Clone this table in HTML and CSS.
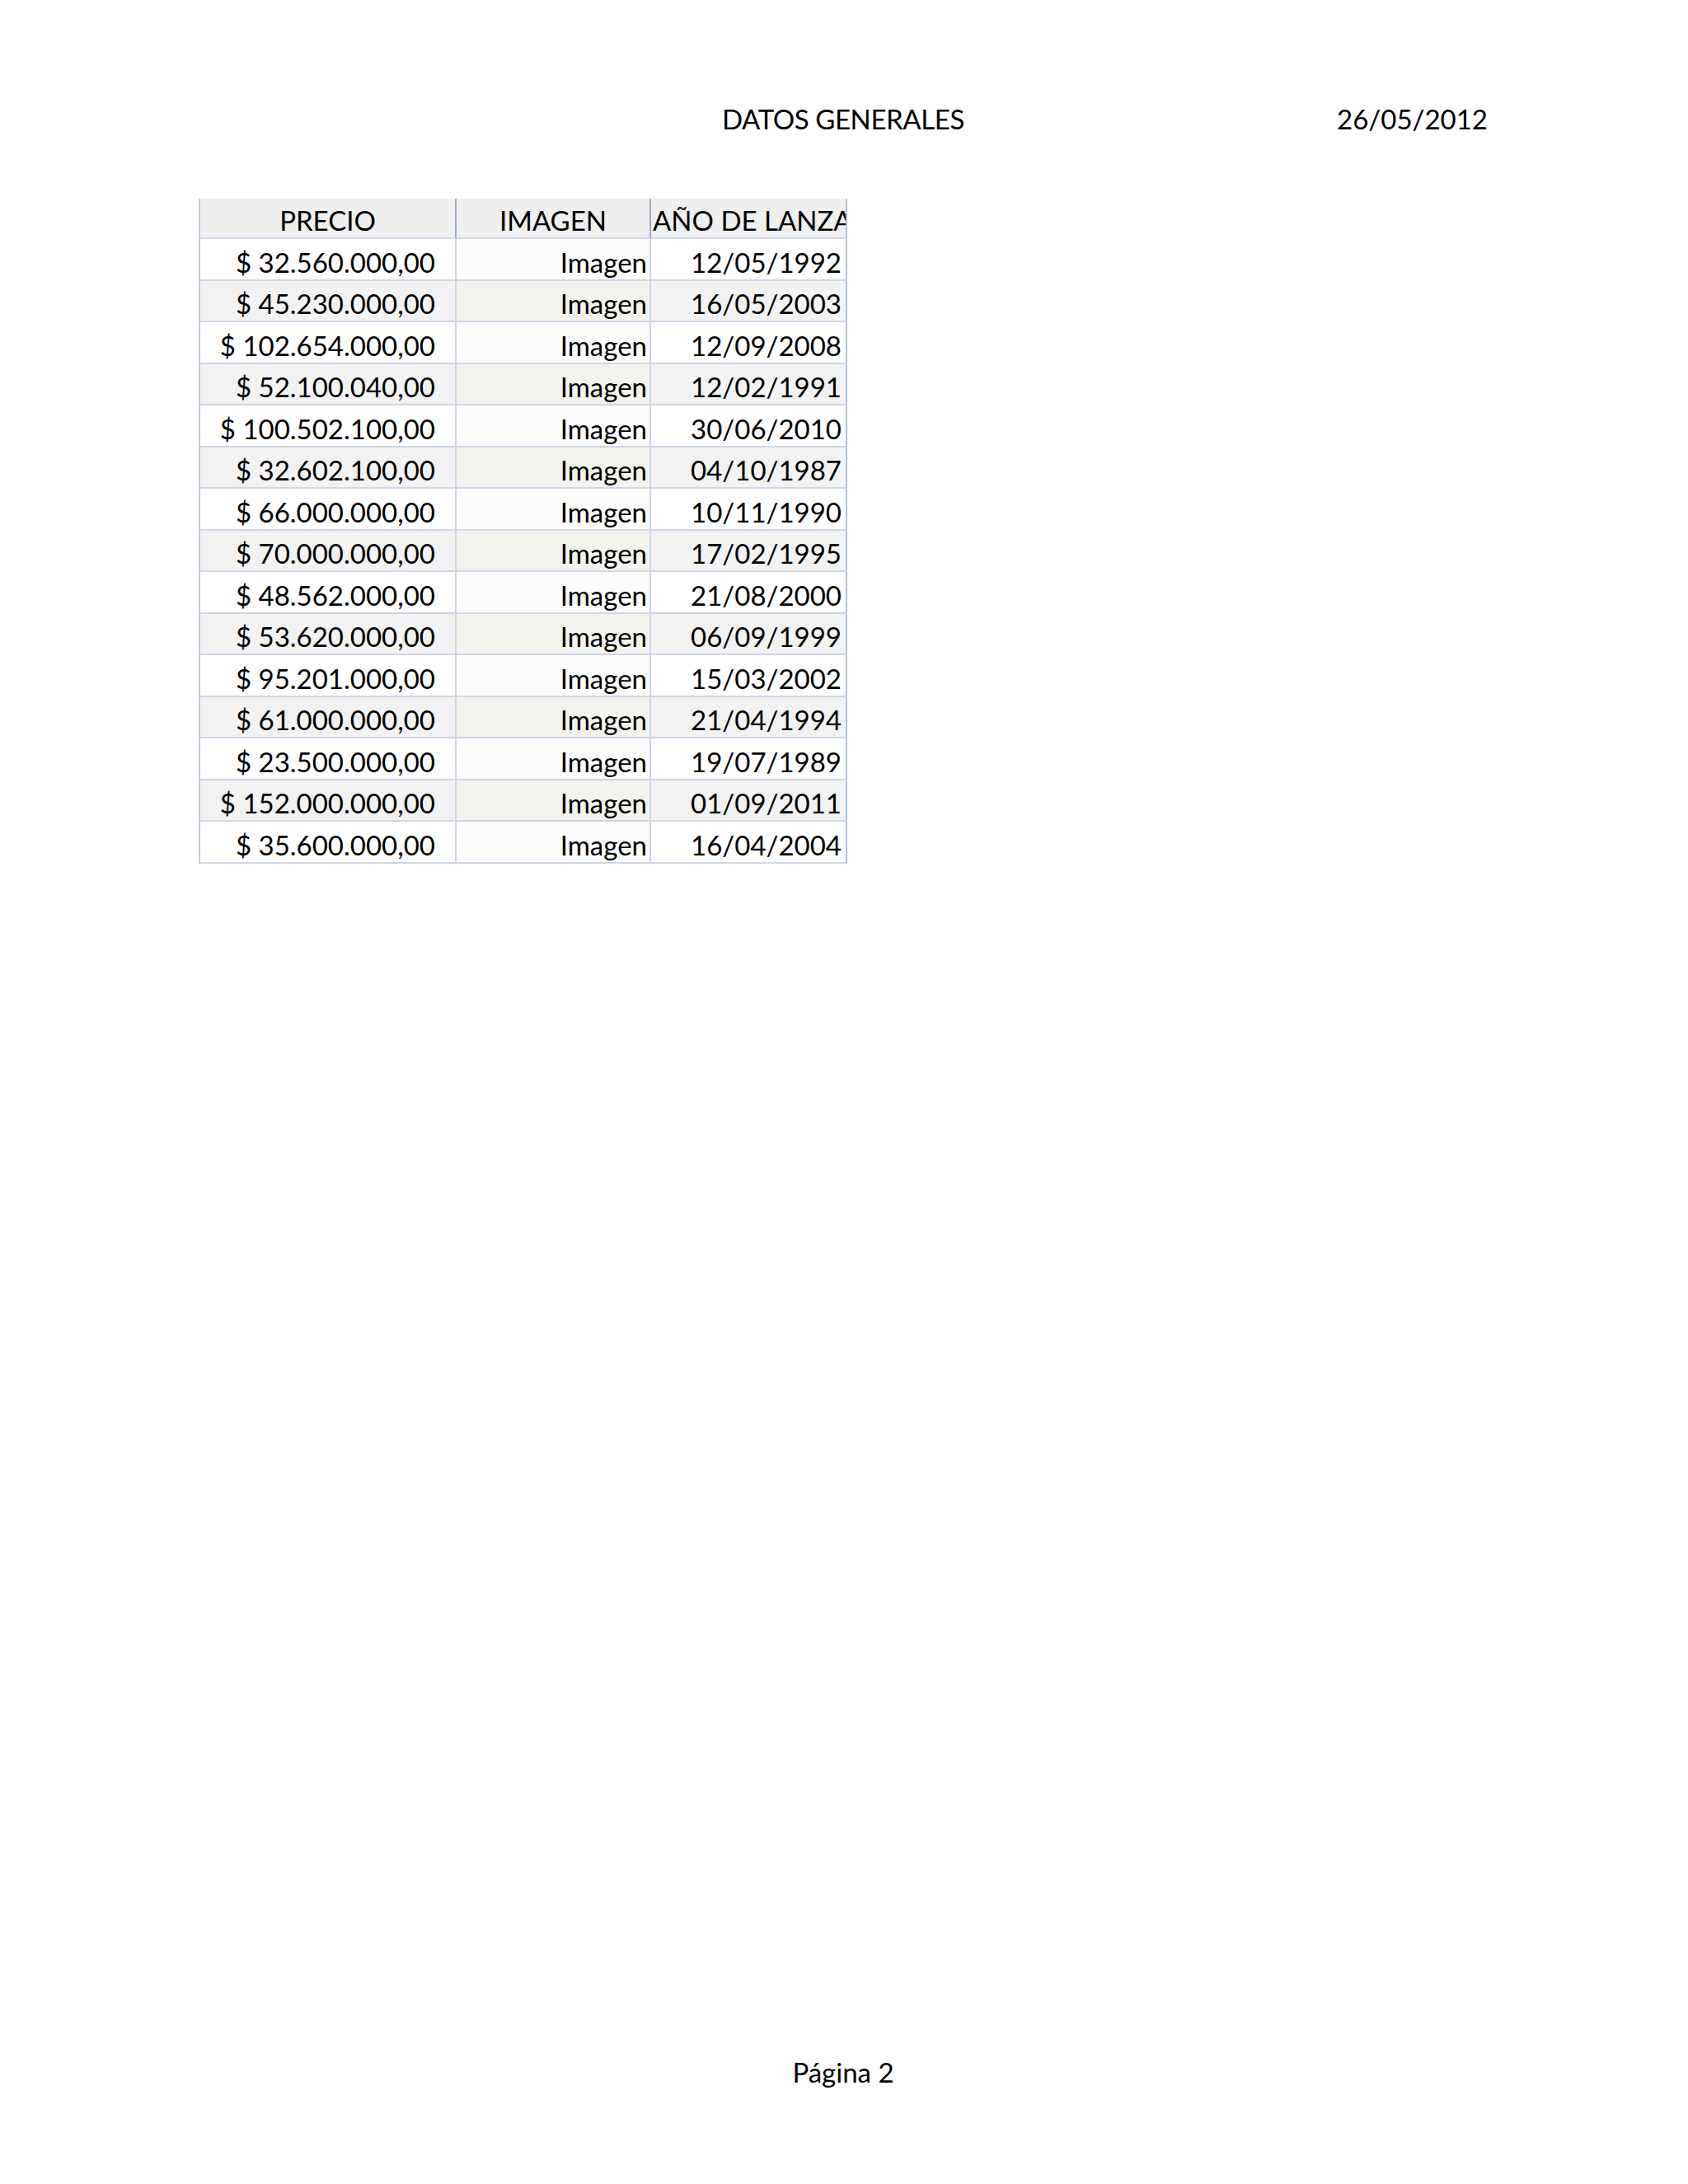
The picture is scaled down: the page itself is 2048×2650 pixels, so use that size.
FILE: index.html
```html
<!DOCTYPE html>
<html lang="es">
<head>
<meta charset="utf-8">
<title>DATOS GENERALES</title>
<link rel="stylesheet" href="styles.css">
</head>
<body>
<div class="page">
  <header class="top">
    <span class="top-left"></span>
    <span class="top-center">DATOS GENERALES</span>
    <span class="top-right">26/05/2012</span>
  </header>

  <div class="sheet">
    <div class="row head">
      <div class="cell c1">PRECIO</div>
      <div class="cell c2">IMAGEN</div>
      <div class="cell c3">AÑO DE LANZAMIENTO</div>
    </div>
    <div class="row odd"><div class="cell c1">$ 32.560.000,00</div><div class="cell c2">Imagen</div><div class="cell c3">12/05/1992</div></div>
    <div class="row even"><div class="cell c1">$ 45.230.000,00</div><div class="cell c2">Imagen</div><div class="cell c3">16/05/2003</div></div>
    <div class="row odd"><div class="cell c1">$ 102.654.000,00</div><div class="cell c2">Imagen</div><div class="cell c3">12/09/2008</div></div>
    <div class="row even"><div class="cell c1">$ 52.100.040,00</div><div class="cell c2">Imagen</div><div class="cell c3">12/02/1991</div></div>
    <div class="row odd"><div class="cell c1">$ 100.502.100,00</div><div class="cell c2">Imagen</div><div class="cell c3">30/06/2010</div></div>
    <div class="row even"><div class="cell c1">$ 32.602.100,00</div><div class="cell c2">Imagen</div><div class="cell c3">04/10/1987</div></div>
    <div class="row odd"><div class="cell c1">$ 66.000.000,00</div><div class="cell c2">Imagen</div><div class="cell c3">10/11/1990</div></div>
    <div class="row even"><div class="cell c1">$ 70.000.000,00</div><div class="cell c2">Imagen</div><div class="cell c3">17/02/1995</div></div>
    <div class="row odd"><div class="cell c1">$ 48.562.000,00</div><div class="cell c2">Imagen</div><div class="cell c3">21/08/2000</div></div>
    <div class="row even"><div class="cell c1">$ 53.620.000,00</div><div class="cell c2">Imagen</div><div class="cell c3">06/09/1999</div></div>
    <div class="row odd"><div class="cell c1">$ 95.201.000,00</div><div class="cell c2">Imagen</div><div class="cell c3">15/03/2002</div></div>
    <div class="row even"><div class="cell c1">$ 61.000.000,00</div><div class="cell c2">Imagen</div><div class="cell c3">21/04/1994</div></div>
    <div class="row odd"><div class="cell c1">$ 23.500.000,00</div><div class="cell c2">Imagen</div><div class="cell c3">19/07/1989</div></div>
    <div class="row even"><div class="cell c1">$ 152.000.000,00</div><div class="cell c2">Imagen</div><div class="cell c3">01/09/2011</div></div>
    <div class="row odd"><div class="cell c1">$ 35.600.000,00</div><div class="cell c2">Imagen</div><div class="cell c3">16/04/2004</div></div>
  </div>

  <footer class="foot">Página 2</footer>
</div>
</body>
</html>
```

FILE: styles.css
```css
html, body {
  margin: 0;
  padding: 0;
  background: #ffffff;
}

body {
  font-family: Lato, "Open Sans", "Noto Sans", sans-serif;
  font-size: 33px;
  line-height: 40px;
  color: #000000;
}

.page {
  box-sizing: border-box;
  width: 2048px;
  min-height: 2650px;
  padding: 124px 243px 116px 241px;
  display: flex;
  flex-direction: column;
}

.top {
  display: grid;
  grid-template-columns: 1fr auto 1fr;
  align-items: baseline;
}

.top-center {
  text-align: center;
  letter-spacing: -0.4px;
}

.top-right {
  text-align: right;
}

.sheet {
  margin-top: 77px;
  align-self: flex-start;
  border-left: 2px solid #c3cbde;
  display: flex;
  flex-direction: column;
}

.row {
  display: grid;
  grid-template-columns: 311px 236px 238px;
  height: 50.53px;
}

.row.head {
  height: 49px;
  background: #efefef;
}

.cell {
  box-sizing: border-box;
  border-right: 2px solid #cdd4e6;
  border-bottom: 2px solid #cfd5e6;
  display: flex;
  align-items: flex-end;
  justify-content: flex-end;
  padding-bottom: 1px;
  white-space: nowrap;
  overflow: hidden;
}

.cell.c3 {
  border-right-color: #b3c0d6;
}

.row .c1 { padding-right: 24px; }
.row .c2 { padding-right: 3px; }
.row .c3 { padding-right: 5px; }

.row.head .cell {
  justify-content: center;
  padding-right: 0;
  border-bottom-color: #d2d6e6;
}

.row.head .cell.c1,
.row.head .cell.c2 {
  border-right: 2px solid #9cadc7;
}

.row.head .cell.c3 {
  justify-content: flex-start;
  padding-left: 2px;
}

.row.odd { background: #ffffff; }
.row.odd .c2 { background: #fcfcfb; }
.row.even { background: #f2f2f2; }
.row.even .c2 { background: #f3f3ee; }

.foot {
  margin-top: auto;
  text-align: center;
}
```
